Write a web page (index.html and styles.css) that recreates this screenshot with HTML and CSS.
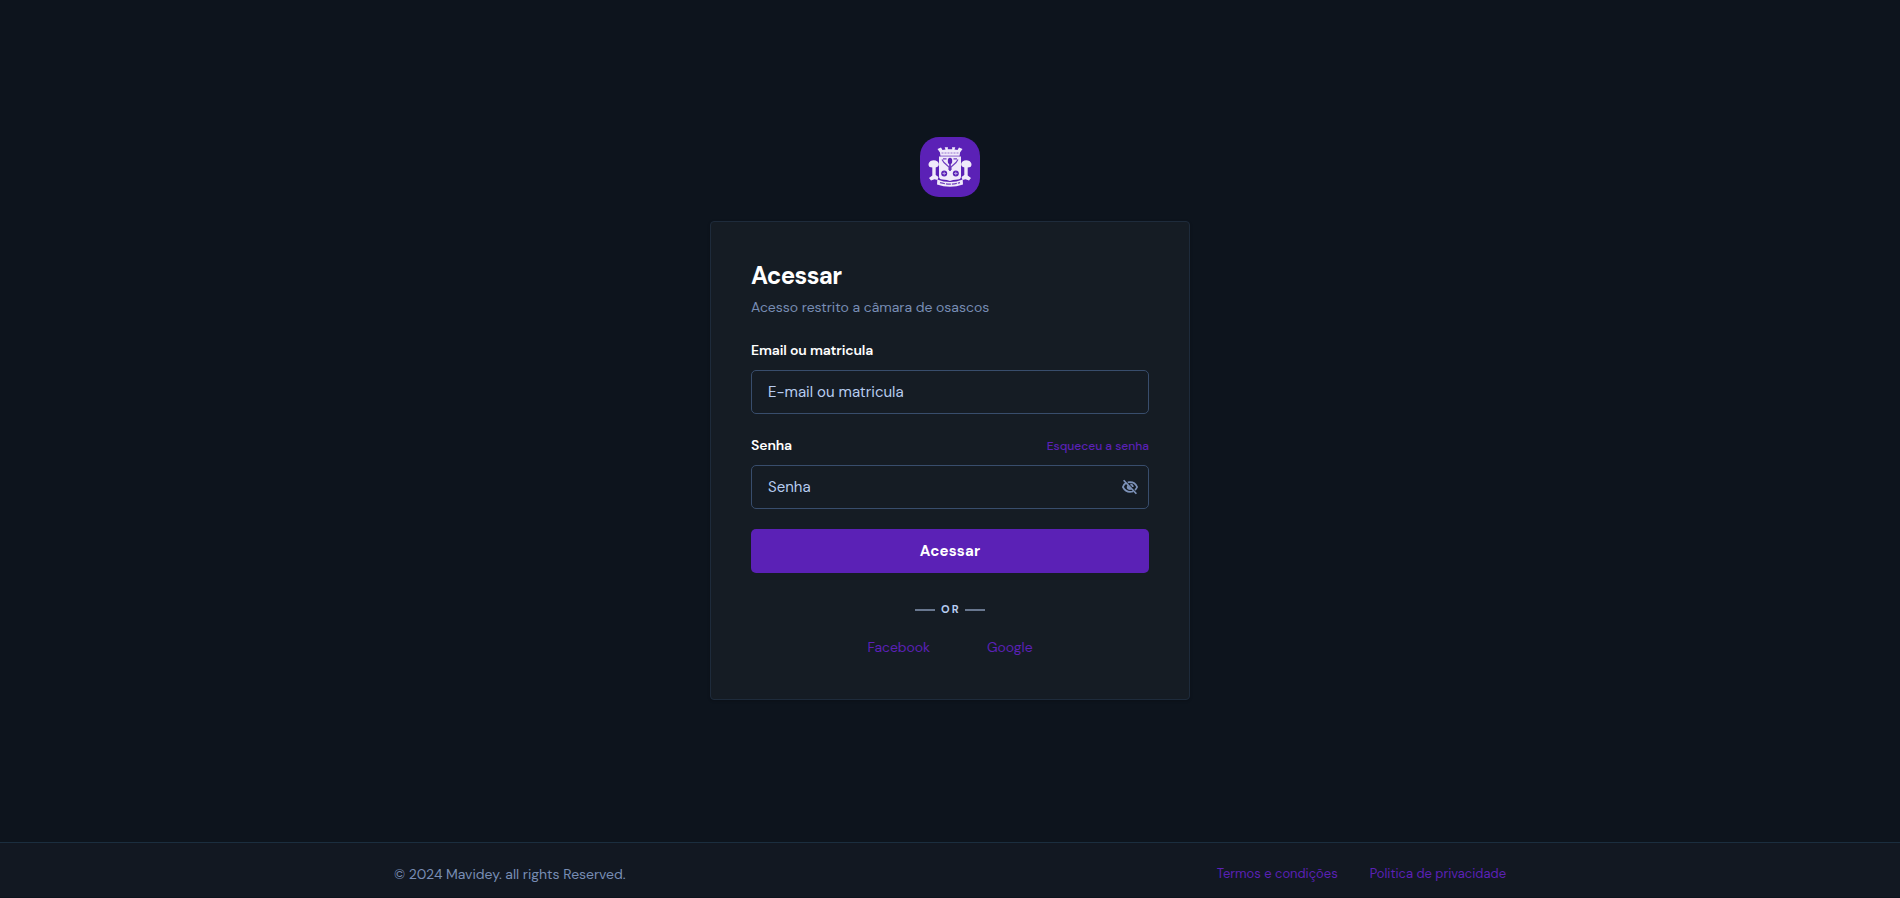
FILE: index.html
```html
<!DOCTYPE html>
<html lang="pt-BR">
<head>
<meta charset="utf-8">
<title>Acessar</title>
<link rel="stylesheet" href="styles.css">
</head>
<body>
<main class="page">
  <a class="brand" href="#" aria-label="Início">
    <svg class="brand-logo" viewBox="0 0 60 60">
      <rect width="60" height="60" rx="19" fill="#5b21b6"/>
      <g fill="#f0eafa">
        <path d="M17.500 12l3.500-1.500 1.500 2.500 3-.5-.8-2.200h3.300l-.3 2h4.600l-.3-2h3.300l-.8 2.200 3 .5 1.500-2.500 3.500 1.500-2.500 3.500-.5 4h-19l-.5-4z"/>
        <path d="M19 19.500h22v20q0 3-3.500 3-5 0-7.500 1.500-2.500-1.500-7.500-1.500-3.500 0-3.500-3z"/>
        <path d="M10.500 24q4-1.500 7 .5 2.500 2.500.5 5l-2.300 1v7.500l2.800 2-1 3-3-.8-3.500 1.300-2-2.500 3.300-2.500v-8l-2.800-.5q-2.500-3 1-6zM49.500 24q-4-1.500-7 .5-2.500 2.500-.5 5l2.300 1v7.500l-2.800 2 1 3 3-.8 3.500 1.300 2-2.500-3.300-2.500v-8l2.800-.5q2.500-3-1-6z"/>
        <path d="M17.300 42.500q12.700 5.200 25.400 0l.3 5q-13 4.500-26 0z"/>
      </g>
      <g fill="none" stroke="#5b21b6">
        <path d="M21.500 16h17" stroke-width="1" stroke-dasharray="2 1" opacity=".6"/>
        <path d="M20 18.900h20" stroke-width=".8" opacity=".6"/>
        <path d="M22 22.500l2 3 5 4.500v3M38 22.500l-2 3-5 4.500v3M23 21.800h3.500M33.500 21.800h3.500" stroke-width="1.200" opacity=".85"/>
        <path d="M20 45.700q10 2.800 20 0" stroke-width="1.200" stroke-dasharray="5 1" opacity=".85"/>
      </g>
      <g fill="#5b21b6">
        <ellipse cx="30" cy="24" rx="2.200" ry="3.200"/>
        <path d="M29.200 27h1.600v7h-1.600z"/>
        <circle cx="24.200" cy="36.500" r="3"/>
        <circle cx="35.800" cy="36.500" r="3"/>
      </g>
      <path d="M22.500 36.500h3.400M24.200 34.800v3.400M34.100 36.500h3.400M35.800 34.800v3.400" stroke="#b79fe3" fill="none"/>
    </svg>
  </a>
  <section class="card">
    <h1 class="title">Acessar</h1>
    <p class="subtitle">Acesso restrito a câmara de osascos</p>
    <form class="form">
      <div class="label-row"><label class="label">Email ou matricula</label></div>
      <div class="field"><span>E-mail ou matricula</span></div>
      <div class="label-row second"><label class="label">Senha</label><a class="forgot">Esqueceu a senha</a></div>
      <div class="field"><span>Senha</span>
        <svg class="eye" viewBox="0 0 24 24" fill="none" stroke="currentColor" stroke-width="2.300"><path d="M3.500 3l17 18M9 5.800Q18 4 21.500 12q-1 2.300-2.800 4M6.500 6.800Q3.800 8.500 2.500 12q4.500 8.500 13.500 6M12.500 8.500q3 .5 3.300 3.500"/><path d="M8.500 9.300q-2 4 1 6 2.800 1.300 5-.3z" fill="currentColor" stroke="none"/></svg>
      </div>
      <button class="submit" type="button">Acessar</button>
    </form>
    <div class="divider"><span class="or">OR</span></div>
    <div class="social"><a>Facebook</a><a>Google</a></div>
  </section>
</main>
<footer class="footer">
  <div class="footer-inner">
    <p class="copy">© 2024 Mavidey. all rights Reserved.</p>
    <nav class="links"><a>Termos e condições</a><a>Politica de privacidade</a></nav>
  </div>
</footer>
</body>
</html>
```
FILE: styles.css
```css
* { box-sizing: border-box; }
body {
  margin: 0;
  height: 898px;
  display: flex;
  flex-direction: column;
  background: #0d141d;
  color: #fff;
  font-family: "DM Sans", Inter, sans-serif;
  font-size: 14px;
}
h1, p { margin: 0; }
.page {
  height: 842px;
  display: flex;
  flex-direction: column;
  align-items: center;
  padding-top: 137px;
}
.brand, .brand-logo { display: block; width: 60px; height: 60px; }
.card {
  width: 480px;
  height: 479px;
  margin-top: 24px;
  padding: 40px;
  border: 1px solid #1e2b3b;
  border-radius: 4px;
  background: #151c24;
  box-shadow: 0 1px 3px rgba(0, 0, 0, .2);
}
.title { font-size: 24px; line-height: 27px; font-weight: 700; letter-spacing: -.65px; }
.subtitle { margin-top: 7px; line-height: 22px; color: #788db4; letter-spacing: -.03px; }
.form { margin-top: 21px; }
.label-row { display: flex; justify-content: space-between; height: 31px; line-height: 22px; }
.label-row.second { margin-top: 20px; }
.label { font-weight: 600; letter-spacing: -.13px; }
.forgot { font-size: 12px; font-weight: 500; color: #5b21b6; line-height: 24px; }
.field {
  display: flex;
  align-items: center;
  justify-content: space-between;
  height: 44px;
  padding: 0 9px 0 16px;
  border: 1px solid #384d6c;
  border-radius: 5px;
  color: #b7ccf0;
  font-size: 15px;
}
.eye { width: 18px; height: 18px; color: #7d92b8; }
.submit {
  display: block;
  width: 100%;
  height: 44px;
  margin-top: 20px;
  border: 0;
  border-radius: 5px;
  background: #5b21b6;
  color: #fff;
  font: 700 15px "DM Sans", Inter, sans-serif;
  letter-spacing: .01em;
}
.divider { display: flex; align-items: center; justify-content: center; gap: 6px; height: 20px; margin-top: 26px; color: #b7ccf0; }
.divider::before, .divider::after { content: ""; width: 20px; height: 2px; margin-top: 1px; background: #68778f; }
.or { width: 18px; font-size: 11px; font-weight: 700; letter-spacing: 2.2px; }
.social { display: flex; justify-content: center; gap: 57px; margin-top: 17px; line-height: 22px; color: #5b21b6; letter-spacing: -.05px; }
.footer { height: 55px; border-top: 1px solid #1b2e3f; background: #121822; }
.footer-inner { display: flex; justify-content: space-between; width: 1112px; margin: 0 auto; padding-top: 20px; line-height: 22px; }
.copy { color: #788db4; letter-spacing: -.03px; }
.links { display: flex; gap: 32px; color: #5b21b6; font-size: 13px; line-height: 21px; letter-spacing: -.03px; }
```
